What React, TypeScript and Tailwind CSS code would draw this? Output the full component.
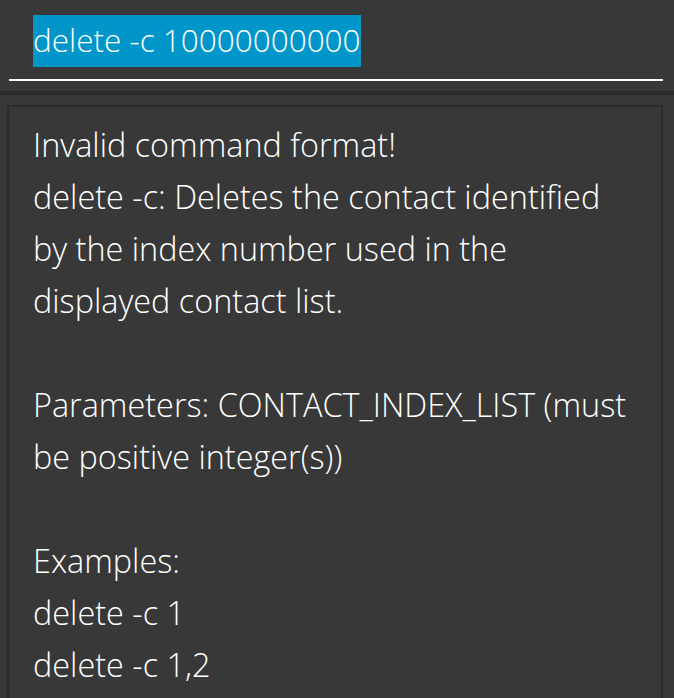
import React from "react";

const lines = [
  "Invalid command format!",
  "delete -c: Deletes the contact identified",
  "by the index number used in the",
  "displayed contact list.",
  "",
  "Parameters: CONTACT_INDEX_LIST (must",
  "be positive integer(s))",
  "",
  "Examples:",
  "delete -c 1",
  "delete -c 1,2",
];

export default function App() {
  return (
    <div
      className="w-full h-[698px] overflow-hidden bg-[#383838] text-white font-light"
      style={{ fontFamily: '"Open Sans", "Noto Sans", sans-serif' }}
    >
      {/* command box */}
      <div className="pl-[9px] pr-[11px] pt-[15px] pb-[10px]">
        <div className="pl-[24px] h-[52px] flex items-center">
          <span className="bg-[#0096c9] h-[52px] leading-[50px] text-[31.5px] whitespace-pre">
            delete -c 10000000000
          </span>
        </div>
        <div className="mt-[12px] h-[2px] bg-white" />
      </div>
      <div className="h-[4px] bg-[#2b2b2b]" />

      {/* result panel */}
      <div className="pl-[7px] pr-[11px] pt-[10px]">
        <div className="border-2 border-[#2b2b2b] h-[620px] pl-[24px] pt-[11px]">
          {lines.map((l, i) => (
            <div key={i} className="h-[52px] leading-[52px] text-[32.4px] whitespace-pre">
              {l}
            </div>
          ))}
        </div>
      </div>
    </div>
  );
}
